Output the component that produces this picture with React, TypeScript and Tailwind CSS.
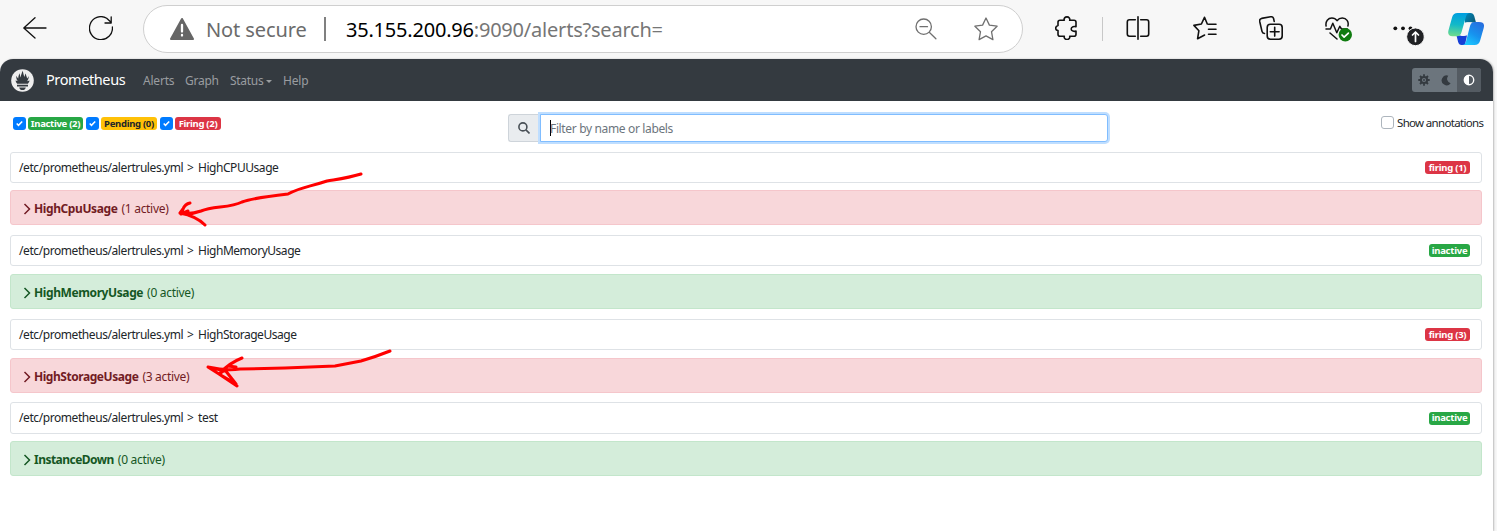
import React from "react";

type Kind = "firing" | "inactive";
type Rule = { group: string; groupSpacing: string; alert: string; alertSpacing: string; active: number; badge: string; kind: Kind; gap: string; height: string; alertGap: string };

const rules: Rule[] = [
  { group: "HighCPUUsage", groupSpacing: "tracking-[-0.45px]", alert: "HighCpuUsage", alertSpacing: "tracking-[-0.4px]", active: 1, badge: "firing (1)", kind: "firing", gap: "mt-0", height: "h-[31px]", alertGap: "mt-[7px]" },
  { group: "HighMemoryUsage", groupSpacing: "tracking-[-0.47px]", alert: "HighMemoryUsage", alertSpacing: "tracking-[-0.4px]", active: 0, badge: "inactive", kind: "inactive", gap: "mt-[10px]", height: "h-[31px]", alertGap: "mt-[8px]" },
  { group: "HighStorageUsage", groupSpacing: "tracking-[-0.47px]", alert: "HighStorageUsage", alertSpacing: "tracking-[-0.45px]", active: 3, badge: "firing (3)", kind: "firing", gap: "mt-[10px]", height: "h-[31px]", alertGap: "mt-[8px]" },
  { group: "test", groupSpacing: "tracking-[-0.35px]", alert: "InstanceDown", alertSpacing: "tracking-[-0.53px]", active: 0, badge: "inactive", kind: "inactive", gap: "mt-[9px]", height: "h-[32px]", alertGap: "mt-[7px]" },
];

function Icon({ children, className = "", box = "0 0 24 24" }: { children: React.ReactNode; className?: string; box?: string }) {
  return (
    <svg viewBox={box} className={"block shrink-0 " + className} fill="none" stroke="currentColor" strokeWidth="1.3" strokeLinecap="round" strokeLinejoin="round">
      {children}
    </svg>
  );
}

function Toolbar() {
  return (
    <div className="flex h-[59px] items-start bg-[#f7f7f7] text-[#111]">
      <Icon className="ml-[23px] mt-[16px] size-6">
        <path d="M23 12H.8M12 1.8.8 12 12 22" />
      </Icon>
      <Icon className="ml-[42px] mt-[16px] size-6">
        <path d="M23.4 11A11.5 11.5 0 1 1 17.7 2.2L22 6.3M22.2.8V7h-6.2" />
      </Icon>
      <div className="ml-[30px] mt-[5px] flex h-[48px] w-[880px] items-center rounded-full border border-[#cfcfcf] bg-white">
        <Icon className="ml-[26px] size-6" box="0 0 24 24">
          <path d="M12 2 23 22H1z" fill="#666" stroke="#666" strokeWidth="2" />
          <path d="M12 8v6.5M12 18v.5" stroke="#fff" strokeWidth="2.3" />
        </Icon>
        <span className="ml-[12px] mt-[2px] w-[101px] whitespace-nowrap text-[20px] leading-6 tracking-[-0.1px] text-[#6b6b6b]">Not secure</span>
        <span className="ml-[17px] h-6 w-[2px] bg-[#808080]" />
        <span className="ml-[20px] mt-[2px] w-[330px] whitespace-nowrap text-[20px] leading-6 tracking-[-0.21px] text-[#767676]">
          <span className="text-black">35.155.200.96</span>:9090/alerts?search=
        </span>
        <Icon className="ml-[239px] size-[22px] text-[#707070]" box="0 0 22 22">
          <circle cx="8.7" cy="8.7" r="7.7" />
          <path d="m14.5 14.5 6.4 6.2M5 8.7h7.5" />
        </Icon>
        <Icon className="ml-[37px] size-6 text-[#707070]">
          <path d="m12 1 3.4 7.1 7.7 1.1-5.6 5.5 1.4 7.9L12 18.9l-6.900 3.7 1.4-7.9L.9 9.2l7.7-1.1z" />
        </Icon>
      </div>
      <Icon className="ml-[32px] mt-[16px] size-6" box="0 0 24 24">
        <path strokeWidth="1.6" d="M5 4.300h4.300C8.600 2.400 10 .9 12 .9s3.200 1.500 2.700 3.400H19q2 0 2 2v4.500c-1.700-.8-4.800-.2-4.800 2.100s3.100 2.900 4.800 2.100v3.200q0 2-2 2h-4.300c.5 1.900-.8 3.300-2.700 3.300s-3.300-1.400-2.700-3.300H5q-2 0-2-2v-3.700C1.400 14.400.7 13.600.7 12.200s1-2.400 2.300-2.700V6.300q0-2 2-2Z" />
      </Icon>
      <span className="ml-[23px] mt-[17px] h-6 w-px bg-[#c8c8c8]" />
      <Icon className="ml-[23px] mt-[16px] size-6">
        <path strokeWidth="1.6" d="M12 .8v22.4M9.3 3.8H3.500q-2.200 0-2.200 2.200v12q0 2.200 2.200 2.200h5.800M14.700 3.800h5.800q2.200 0 2.200 2.200v12q0 2.200-2.200 2.200h-5.800" />
      </Icon>
      <Icon className="ml-[43px] mt-[16px] size-6">
        <path strokeWidth="1.6" d="M14.3 8 11.5 1.3 8.4 8 .9 9.4l5 5.3-1.3 8L11.6 19M15.5 8.2H23M15.5 13.2H23M15.5 18.2H23" />
      </Icon>
      <Icon className="ml-[42px] mt-[16px] size-6">
        <rect x="8.2" y="8.2" width="15" height="15" rx="3.2" strokeWidth="1.6" />
        <path strokeWidth="1.6" d="M15.700 11.300v8.800M11.300 15.700h8.800M5.500 17.500C4 17.400 3.300 16.800 3 15.400L.7 5.400Q.3 3 2.600 2.400L11.600.8q2.300-.4 3 1.800l.6 2.800" />
      </Icon>
      <div className="ml-[42px] mt-[16px] h-[28px] w-[28px]">
        <Icon className="size-7" box="0 0 28 28">
          <path strokeWidth="1.5" d="M1.100 10C.2 5.200 3.200 2 6.900 2c2.200 0 4 1.100 5.100 2.700C13.300 3 15.200 2 17.300 2c4.100 0 6.800 3.600 5.600 8M1 13h4.400l2.400-5.800 4 9.600 3-6.500 1.700 2.700h5.800M5 17l7 6" />
          <circle cx="20.300" cy="18.800" r="6.700" fill="#0f7b0f" stroke="none" />
          <path stroke="#fff" d="m17 19 2.100 2.100 4.300-4" strokeWidth="1.700" />
        </Icon>
      </div>
      <Icon className="ml-[40px] mt-[16px] h-[30px] w-[32px]" box="0 0 32 30">
        <g fill="#111" stroke="none"><circle cx="2.300" cy="12.300" r="1.900" /><circle cx="10" cy="12.300" r="1.900" /><circle cx="17.500" cy="12.300" r="1.900" /></g>
        <circle cx="22.500" cy="20.800" r="8.900" fill="#202124" stroke="#f7f7f7" strokeWidth="1" />
        <path stroke="#fff" d="M22.500 25.500v-9.500m-3 3 3-3 3 3" strokeWidth="1.700" />
      </Icon>
      <Copilot />
    </div>
  );
}

function Copilot() {
  return (
    <svg viewBox="0 0 36 32" className="ml-[23px] mt-[13px] h-8 w-9 shrink-0">
      <defs>
        <linearGradient id="cl" x1=".4" y1="0" x2=".3" y2="1"><stop stopColor="#009fe0" /><stop offset=".5" stopColor="#12b9c8" /><stop offset="1" stopColor="#6fdc8c" /></linearGradient>
        <linearGradient id="cr" x1=".9" y1="0" x2=".3" y2="1"><stop stopColor="#286bdd" /><stop offset=".55" stopColor="#1792ee" /><stop offset="1" stopColor="#1bc6ff" /></linearGradient>
        <linearGradient id="ct" x1="0" y1="0" x2="1" y2=".6"><stop stopColor="#0089bd" /><stop offset="1" stopColor="#0a5f7d" /></linearGradient>
      </defs>
      <path d="M17 0h5.500q2.800 0 3.700 3l1.800 6.500H17Z" fill="url(#ct)" />
      <path d="M8.500 22.500H19L17 32h-3.500q-2.500 0-3.400-3Z" fill="#173fd6" />
      <path d="M9.500 0H22q-3 0-4 3.500l-4.500 15.700q-1.100 4-4.500 4H4.500q-5.500 0-4-6L4.200 4Q5.400 0 9.500 0Z" fill="url(#cl)" />
      <path d="M26.500 9H31q6.300 0 4.700 6L32 28q-1.200 4-5.300 4H14q3 0 4-3.500L22 13q1.100-4 4.500-4Z" fill="url(#cr)" />
      <path d="M19 9.200h5.200q-1.900.7-2.700 3.300L19.300 20q-.8 3-3.500 3H12q2-.7 2.800-3.300l2.300-8.500q.6-2 1.900-2Z" fill="#f7f7f7" />
    </svg>
  );
}

function Logo() {
  return (
    <svg viewBox="0 0 23 23" className="size-[23px] shrink-0">
      <circle cx="11.500" cy="11.500" r="11.300" fill="#eee" />
      <g fill="#343a40">
        <path d="M6.200 14.700C4.900 13.300 4.700 12.200 4.500 11.500l2.200.6C5.300 10 5.100 8.300 5.400 6.700c.7 1.500 1.300 2.200 1.900 2.700C7 7.500 8.200 6 8.200 4.200c.9 1.300.8 2.800 1.500 4.200C9.800 5.800 11.100 4 11.500 1.800c1.100 2.600 1 4.300 2 6.300.2-1.400.5-2.800 1.300-3.700 0 2.200 1.500 3.500 1.200 5.200.8-.6 1.200-1.400 1.600-2.500.3 2-.3 3.600-1.500 5.100l2.400-.6c-.1 1-.5 2-1.600 3.100Z" />
        <path d="M6 15.700h11v1.700H6zM8.200 18.500h6.600c-.3 1.700-1.600 2.600-3.300 2.600s-3-.9-3.300-2.600Z" />
      </g>
    </svg>
  );
}

function Navbar() {
  return (
    <nav className="flex h-[42px] items-center rounded-t-[13px] bg-[#343a40] pl-[11px] pr-3 text-[12px] text-[#9a9da0]">
      <Logo />
      <span className="-mt-px ml-[12px] w-[80px] whitespace-nowrap text-[14.500px] tracking-[-0.4px] text-white">Prometheus</span>
      <span className="ml-[17px] mt-[2px] w-[31px] tracking-[-0.2px]">Alerts</span>
      <span className="ml-[11px] mt-[2px] w-[33px] tracking-[-0.25px]">Graph</span>
      <span className="ml-[12px] mt-[2px] flex w-[42px] items-center tracking-[-0.3px]">Status<span className="ml-[3px] border-x-[3px] border-t-[3px] border-x-transparent" /></span>
      <span className="ml-[11px] mt-[2px] tracking-[-0.2px]">Help</span>
      <div className="ml-auto flex h-6 overflow-hidden rounded-[3px] bg-[#6c757d] text-[#343a40]">
        <span className="flex w-[24px] items-center justify-center">
          <svg viewBox="0 0 12 12" className="size-3" fill="none" stroke="currentColor">
            <circle cx="6" cy="6" r="3.100" strokeWidth="2" /><circle cx="6" cy="6" r=".9" fill="currentColor" stroke="none" />
            <path strokeWidth="1.800" d="M6 .3v2M6 9.700v2M.3 6h2M9.700 6h2M2 2l1.500 1.500M8.500 8.500 10 10M10 2 8.500 3.500M3.500 8.500 2 10" />
          </svg>
        </span>
        <span className="flex w-[21px] items-center justify-center"><svg viewBox="0 0 12 12" className="size-[11px]"><path fill="currentColor" d="M8 .7A5.400 5.400 0 1 0 10.500 9 5 5 0 0 1 8 .7Z" /></svg></span>
        <span className="flex w-6 items-center justify-center bg-[#545b62] text-white">
          <svg viewBox="0 0 12 12" className="size-3"><circle cx="6" cy="6" r="4.700" fill="none" stroke="currentColor" strokeWidth="1.400" /><path fill="currentColor" d="M6 1a5 5 0 0 0 0 10z" /></svg>
        </span>
      </div>
    </nav>
  );
}

function Checked() {
  return (
    <span className="flex size-[13px] items-center justify-center rounded-[3px] bg-[#007bff]">
      <svg viewBox="0 0 8 8" className="size-[7px]" fill="none" stroke="#fff" strokeWidth="1.700"><path d="m.8 4.100 2 2 4.300-4.500" /></svg>
    </span>
  );
}

function Filters() {
  const pill = "flex h-[13px] items-center justify-center rounded-[3px] pt-px text-[9.500px] font-bold tracking-[-0.3px] whitespace-nowrap";
  return (
    <div className="flex h-[51px] items-start">
      <div className="ml-[3px] mt-[16px] flex w-[208px] items-center">
        <Checked /><span className={pill + " ml-[2px] w-[55px] bg-[#28a745] text-white"}>Inactive (2)</span>
        <span className="w-[3px]" /><Checked /><span className={pill + " ml-[2px] w-[56px] bg-[#ffc107] text-[#212529]"}>Pending (0)</span>
        <span className="w-[3px]" /><Checked /><span className={pill + " ml-[2px] w-[46px] bg-[#dc3545] text-white"}>Firing (2)</span>
      </div>
      <div className="ml-[287px] mt-[13px] flex h-[28px] w-[600px]">
        <span className="flex w-[32px] items-center justify-center rounded-l-[3px] border border-r-0 border-[#ced4da] bg-[#e9ecef] pr-px text-[#495057]">
          <svg viewBox="0 0 12 12" className="size-3" fill="none" stroke="currentColor" strokeWidth="1.600"><circle cx="4.900" cy="4.900" r="4" /><path d="m7.900 7.900 3.600 3.600" /></svg>
        </span>
        <div className="flex grow items-center rounded-r-[3px] border border-[#80bdff] bg-white pl-[9px] text-[12px] tracking-[-0.35px] text-[#6c757d] shadow-[0_0_0_2px_#bfdeff]">
          <span className="h-4 w-px bg-black" /><span className="-ml-px mt-[2px]">Filter by name or labels</span>
        </div>
      </div>
      <div className="ml-auto mt-[13px] flex h-[17px] items-center">
        <span className="size-[13px] rounded-[3px] border border-[#adb5bd] bg-white" />
        <span className="ml-[3px] w-[85px] whitespace-nowrap text-[11.500px] tracking-[-0.68px]">Show annotations</span>
      </div>
    </div>
  );
}

function RuleGroup({ rule }: { rule: Rule }) {
  const firing = rule.kind === "firing";
  return (
    <section className={rule.gap}>
      <div className={"flex items-center justify-between rounded-[3px] border border-[#dee2e6] pl-2 pr-[11px] text-[12px] " + rule.height}>
        <span className="flex whitespace-nowrap"><span className="w-[164px] tracking-[-0.42px]">/etc/prometheus/alertrules.yml</span><span className="ml-[4px] w-[11px]">&gt;</span><span className={rule.groupSpacing}>{rule.group}</span></span>
        <span className={"flex h-[13px] items-center justify-center rounded-[3px] pt-px text-[9.500px] font-bold tracking-[-0.25px] text-white " + (firing ? "w-[45px] bg-[#dc3545]" : "w-[41px] bg-[#28a745]")}>{rule.badge}</span>
      </div>
      <div className={"flex h-[35px] items-center whitespace-nowrap rounded-[3px] border pl-[12px] pt-[2px] text-[12px] " + rule.alertGap + " " + (firing ? "border-[#f5c6cb] bg-[#f8d7da] text-[#721c24]" : "border-[#c3e6cb] bg-[#d4edda] text-[#155724]")}>
        <svg viewBox="0 0 8 12" className="mr-[3px] h-3 w-2" fill="none" stroke="currentColor" strokeWidth="1.500"><path d="m1.500 1 5 5-5 5" /></svg>
        <strong className={rule.alertSpacing}>{rule.alert}</strong><span className="ml-[4px] tracking-[-0.3px]">({rule.active} active)</span>
      </div>
    </section>
  );
}

function Arrows() {
  return (
    <svg viewBox="0 0 1497 531" className="pointer-events-none absolute inset-0 h-full w-full" fill="none" stroke="red" strokeWidth="3" strokeLinecap="round" strokeLinejoin="round">
      <path d="M361 174C348 178 339 179 327 181C309 187 301 187 288 194C270 196 253 198 242 202C230 208 213 206 201 211C193 214 186 214 180 213M190 203Q185 204 183 209L180 213Q196 216 205 225M184 207 181 214 188 211" />
      <path d="M390 351Q375 357 361 361L335 366L285 368L240 369Q226 371 208 367L219 374Q229 363 242 358M219 374 237 386M219 374 225 370 236 384 219 374 228 366 236 367M208 367 221 370" />
    </svg>
  );
}

export default function App() {
  return (
    <div className="relative h-[531px] w-[1497px] overflow-hidden bg-[#f7f7f7] font-['Noto_Sans','Open_Sans',sans-serif] text-[#212529]">
      <Toolbar />
      <div className="h-[472px] w-[1493px] rounded-t-[13px] bg-white shadow-[1px_0_2px_#bbb]">
        <Navbar />
        <main className="pl-[10px] pr-[11px]">
          <Filters />
          {rules.map((rule) => <RuleGroup key={rule.group} rule={rule} />)}
        </main>
      </div>
      <Arrows />
    </div>
  );
}
